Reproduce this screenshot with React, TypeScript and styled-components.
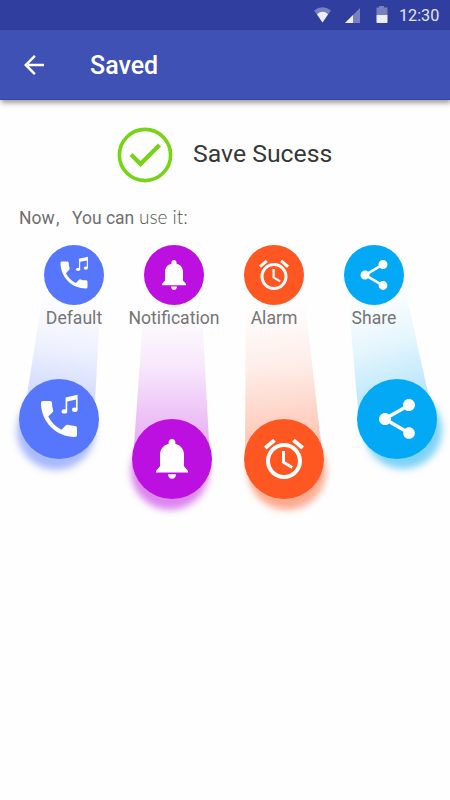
import React from "react";
import styled, { createGlobalStyle } from "styled-components";

const GlobalStyle = createGlobalStyle`
  * { box-sizing: border-box; }
  body { margin: 0; background: #fff; font-family: Roboto, sans-serif; }
`;

const Screen = styled.div`
  width: 450px;
  height: 800px;
  overflow: hidden;
  background: #fefefe;
`;

const StatusBar = styled.div`
  display: flex;
  align-items: center;
  justify-content: flex-end;
  height: 30px;
  padding-right: 11px;
  background: #303f9f;
`;

const StatusIcons = styled.svg`
  width: 76px;
  height: 30px;
  margin-right: 9px;
`;

const Clock = styled.span`
  width: 40px;
  font-size: 16.2px;
  line-height: 30px;
  white-space: nowrap;
  color: #e3e5f4;
  padding-top: 2px;
`;

const AppBar = styled.header`
  display: flex;
  align-items: center;
  height: 70px;
  padding-left: 19px;
  background: #3f51b5;
  border-bottom: 1px solid #3046a8;
  box-shadow: 1px 3px 5px rgba(0, 0, 0, 0.38);
`;

const BackIcon = styled.svg`
  width: 30px;
  height: 30px;
  margin-right: 41px;
`;

const Title = styled.h1`
  margin: 0;
  padding-top: 2px;
  font-size: 25px;
  font-weight: 500;
  line-height: 30px;
  color: #fff;
`;

const Result = styled.section`
  display: flex;
  align-items: center;
  height: 56px;
  margin: 27px 0 0 117px;
`;

const CheckIcon = styled.svg`
  width: 56px;
  height: 56px;
  margin-right: 20px;
`;

const ResultText = styled.span`
  font-size: 24.8px;
  line-height: 30px;
  color: #383838;
  white-space: nowrap;
  padding-bottom: 3px;
`;

const Hint = styled.p`
  display: flex;
  align-items: baseline;
  height: 24px;
  margin: 22px 0 0 19px;
  font-size: 17.5px;
  line-height: 24px;
  color: #6f6f6f;
  white-space: pre;
`;

const HintWord = styled.span<{ $width: number }>`
  width: ${(p) => p.$width}px;
`;

const HintLight = styled.span`
  font-family: Lato, sans-serif;
  font-weight: 300;
  font-size: 19px;
  color: #555;
`;

const Actions = styled.section`
  display: grid;
  grid-template-columns: repeat(4, 100px);
  margin: 16px 0 0 24px;
`;

const Action = styled.div`
  position: relative;
  display: flex;
  flex-direction: column;
  align-items: center;
`;

const Disc = styled.div<{ $color: string }>`
  position: relative;
  width: 60px;
  height: 60px;
  border-radius: 50%;
  background: ${(p) => p.$color};
`;

const Label = styled.span`
  position: relative;
  height: 24px;
  margin-top: 1px;
  font-size: 17.6px;
  line-height: 24px;
  color: #757575;
`;

const Beam = styled.div<{
  $shape: string;
  $rgb: string;
  $angle: number;
  $alpha: number;
  $length: number;
}>`
  position: absolute;
  left: -20px;
  top: 30px;
  width: 140px;
  height: ${(p) => p.$length}px;
  clip-path: polygon(${(p) => p.$shape});
  background: linear-gradient(
    ${(p) => p.$angle}deg,
    rgba(${(p) => p.$rgb}, 0) 20%,
    rgba(${(p) => p.$rgb}, ${(p) => p.$alpha * 0.27}) 50%,
    rgba(${(p) => p.$rgb}, ${(p) => p.$alpha}) 95%
  );
`;

const Drop = styled(Disc)<{ $fall: number; $drift: number; $shadow: string }>`
  width: 80px;
  height: 80px;
  margin-top: ${(p) => p.$fall}px;
  transform: translateX(${(p) => p.$drift}px);
  box-shadow: ${(p) => p.$shadow};
`;

const Glyph = styled.svg`
  display: block;
  width: 100%;
  height: 100%;
  fill: #fff;
`;

const glyphs: Record<string, React.ReactNode> = {
  phone: (
    <>
      <path d="M20 15.5c-1.25 0-2.45-.2-3.57-.57-.35-.11-.74-.03-1.02.24l-2.2 2.2c-2.83-1.44-5.15-3.75-6.59-6.59l2.2-2.21c.28-.26.36-.65.25-1C8.7 6.45 8.5 5.25 8.5 4c0-.55-.45-1-1-1H4c-.55 0-1 .45-1 1 0 9.39 7.61 17 17 17 .55 0 1-.45 1-1v-3.5c0-.55-.45-1-1-1z" />
      <path d="M15.3 1.2 21.3-.1v7.5h-.8V2.3l-4.4.9v5h-.8z" />
      <ellipse cx="14.7" cy="8.2" rx="1.4" ry="1.1" />
      <ellipse cx="19.9" cy="7.4" rx="1.4" ry="1.1" />
    </>
  ),
  bell: (
    <path d="M12 2c-1 0-1.7.8-1.7 1.7v.8C7.7 5 6 7.2 6 9.9v5.7L4 18v.8h16V18l-2-2.4V9.9c0-2.7-1.7-4.9-4.3-5.4v-.8C13.7 2.8 13 2 12 2zm-2 17.6c0 1.3.9 2.3 2 2.3s2-1 2-2.3z" />
  ),
  alarm: (
    <path d="M22 5.72l-4.6-3.86-1.29 1.53 4.6 3.86L22 5.72zM7.88 3.39L6.6 1.86 2 5.71l1.29 1.53 4.59-3.85zM12.5 8H11v6l4.75 2.85.75-1.23-4-2.37V8zM12 4c-4.97 0-9 4.03-9 9s4.02 9 9 9c4.97 0 9-4.03 9-9s-4.03-9-9-9zm0 16c-3.87 0-7-3.13-7-7s3.13-7 7-7 7 3.13 7 7-3.13 7-7 7z" />
  ),
  share: (
    <path d="M18 16.08c-.76 0-1.44.3-1.96.77L8.91 12.7c.05-.23.09-.46.09-.7s-.04-.47-.09-.7l7.05-4.11c.54.5 1.25.81 2.04.81 1.66 0 3-1.34 3-3s-1.34-3-3-3-3 1.34-3 3c0 .24.04.47.09.7L8.04 9.81C7.5 9.31 6.79 9 6 9c-1.66 0-3 1.34-3 3s1.34 3 3 3c.79 0 1.5-.31 2.04-.81l7.12 4.16c-.05.21-.08.43-.08.65 0 1.61 1.31 2.92 2.92 2.92s2.92-1.31 2.92-2.92-1.31-2.92-2.92-2.92z" />
  ),
};

const actions = [
  {
    label: "Default", glyph: "phone", color: "#5677fc", rgb: "86, 119, 252",
    fall: 49, drift: -15, angle: 188, alpha: 0.34, length: 145,
    shape: "41px 6px, 98px 0, 90px 145px, 19px 145px",
    shadow: "-3px 12px 7px -1px rgba(86, 119, 252, 0.5)",
  },
  {
    label: "Notification", glyph: "bell", color: "#bc10e0", rgb: "188, 16, 224",
    fall: 89, drift: -2, angle: 180, alpha: 0.36, length: 185,
    shape: "42px 0, 96px 0, 106px 185px, 29px 185px",
    shadow: "-2px 12px 7px -1px rgba(188, 16, 224, 0.5)",
  },
  {
    label: "Alarm", glyph: "alarm", color: "#ff5722", rgb: "255, 87, 34",
    fall: 89, drift: 10, angle: 174, alpha: 0.38, length: 185,
    shape: "42px 0, 98px 0, 119px 185px, 41px 185px",
    shadow: "3px 12px 7px -1px rgba(255, 87, 34, 0.5)",
  },
  {
    label: "Share", glyph: "share", color: "#03a9f4", rgb: "3, 169, 244",
    fall: 49, drift: 23, angle: 164, alpha: 0.36, length: 145,
    shape: "42px 0, 98px 0, 130px 145px, 55px 145px",
    shadow: "6px 11px 7px -1px rgba(3, 169, 244, 0.5)",
  },
];

function ActionGlyph({ name }: { name: string }) {
  return <Glyph viewBox="-8 -8 40 40">{glyphs[name]}</Glyph>;
}

export default function App() {
  return (
    <Screen>
      <GlobalStyle />
      <StatusBar>
        <StatusIcons viewBox="0 0 76 30">
          <path d="M0 10.5Q8.5 4 17 10.5L8.5 22.5Z" fill="#7880c0" />
          <path d="M3 14.2Q8.5 9.5 14 14.2L8.5 22.5Z" fill="#eceef8" />
          <path d="M31 23 46 8v15z" fill="#7880c0" />
          <path d="M31 23l8-8v8z" fill="#eceef8" />
          <path d="M65 6h5v1.5h3.5V15h-11V7.5H65z" fill="#7880c0" />
          <path d="M62.5 15h11v7.2q0 .8-.8.8h-9.4q-.8 0-.8-.8z" fill="#eceef8" />
        </StatusIcons>
        <Clock>12:30</Clock>
      </StatusBar>
      <AppBar>
        <BackIcon viewBox="0 0 24 24" fill="#fff">
          <path d="M20 11H7.83l5.59-5.59L12 4l-8 8 8 8 1.41-1.41L7.83 13H20v-2z" />
        </BackIcon>
        <Title>Saved</Title>
      </AppBar>
      <Result>
        <CheckIcon viewBox="0 0 56 56" fill="none" stroke="#76d414">
          <circle cx="28" cy="28" r="25.6" strokeWidth="3.6" />
          <path d="M14 27.5 23.5 37 42.5 18" strokeWidth="4.2" />
        </CheckIcon>
        <ResultText>Save Sucess</ResultText>
      </Result>
      <Hint>
        <HintWord $width={37}>Now</HintWord>
        <HintWord $width={16}>,</HintWord>
        <HintWord $width={67}>You can</HintWord>
        <HintLight>use it:</HintLight>
      </Hint>
      <Actions>
        {actions.map((a) => (
          <Action key={a.label}>
            <Beam
              $shape={a.shape}
              $rgb={a.rgb}
              $angle={a.angle}
              $alpha={a.alpha}
              $length={a.length}
            />
            <Disc $color={a.color}>
              <ActionGlyph name={a.glyph} />
            </Disc>
            <Label>{a.label}</Label>
            <Drop $color={a.color} $fall={a.fall} $drift={a.drift} $shadow={a.shadow}>
              <ActionGlyph name={a.glyph} />
            </Drop>
          </Action>
        ))}
      </Actions>
    </Screen>
  );
}
